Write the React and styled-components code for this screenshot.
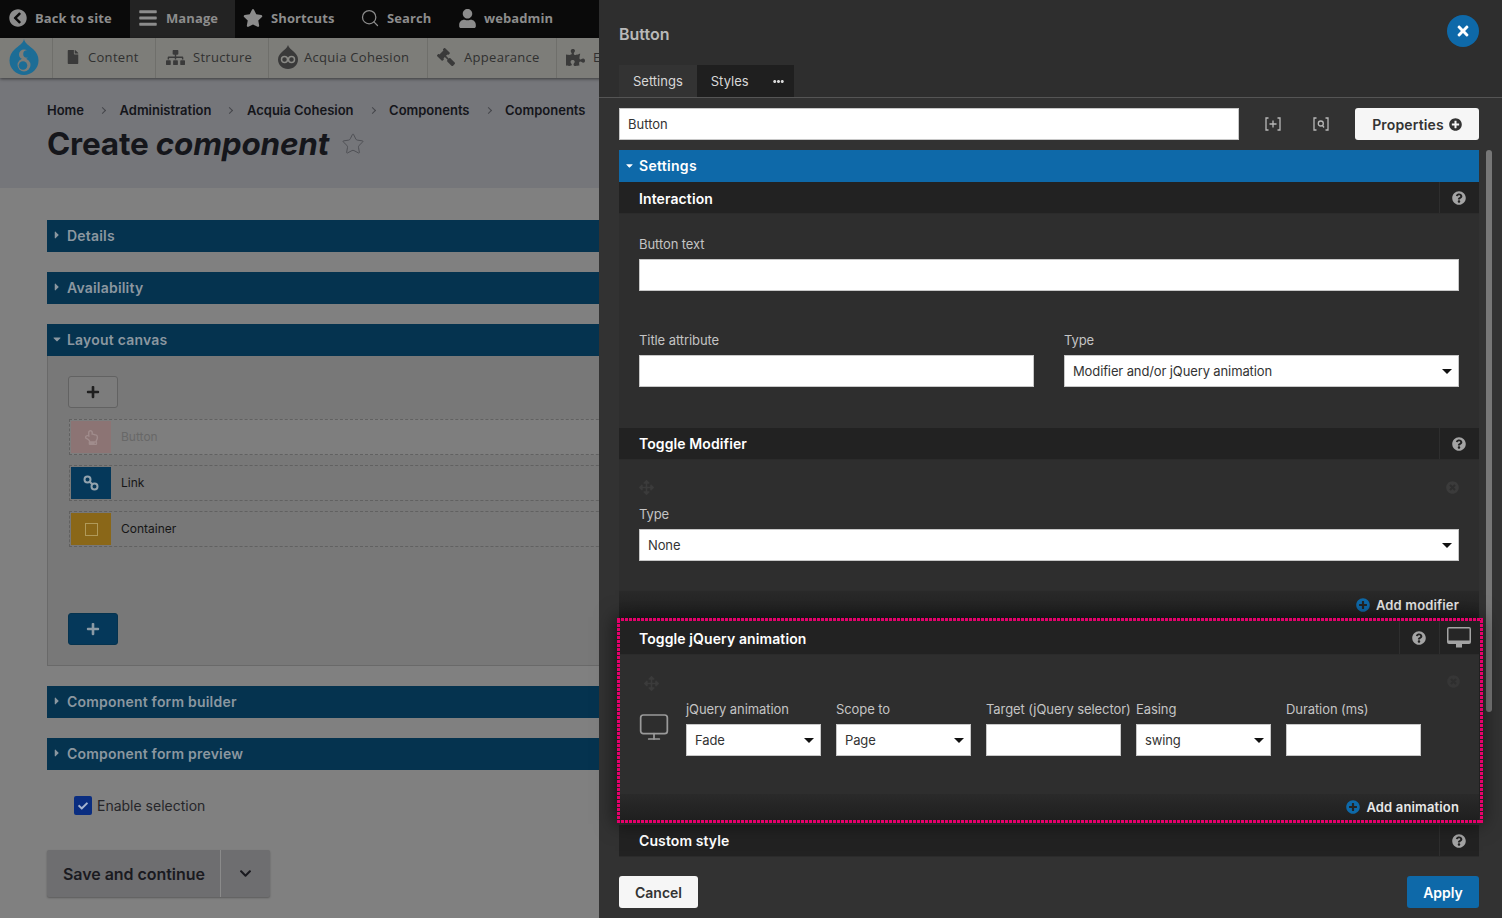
import React from "react";
import styled, { createGlobalStyle } from "styled-components";
import {
  FaChevronCircleLeft,
  FaBars,
  FaStar,
  FaUser,
  FaFile,
  FaSitemap,
  FaGavel,
  FaPuzzlePiece,
  FaPlus,
  FaCheck,
  FaTimes,
  FaPlusCircle,
  FaQuestionCircle,
  FaTimesCircle,
  FaArrowsAlt,
  FaEllipsisH,
  FaCaretDown,
  FaCaretRight,
  FaChevronDown,
  FaRegHandPointUp,
} from "react-icons/fa";
import { Search, Star, Monitor } from "lucide-react";

const GlobalStyle = createGlobalStyle`
  html, body {
    margin: 0;
    padding: 0;
    background: #323232;
  }
  * {
    box-sizing: border-box;
  }
`;

const Page = styled.div`
  display: flex;
  width: 1502px;
  height: 918px;
  overflow: hidden;
  font-family: Inter, "Liberation Sans", sans-serif;
`;

/* left, dimmed admin page */
const Admin = styled.div`
  width: 599px;
  flex: none;
  height: 918px;
  overflow: hidden;
  background: #808080;
`;

const Toolbar = styled.div`
  display: flex;
  height: 38px;
  background: #0a0a0a;
  font-family: "Open Sans", "Liberation Sans", sans-serif;
  font-weight: 700;
  font-size: 13px;
  color: #8c8c8c;
`;

const ToolbarItem = styled.div`
  display: flex;
  align-items: center;
  gap: ${(p) => p.$gap || 8}px;
  height: 38px;
  padding: 0 0 2px ${(p) => p.$left || 0}px;
  width: ${(p) => p.$width}px;
  background: ${(p) => (p.$active ? "#232323" : "transparent")};
  letter-spacing: 0.1px;
  svg {
    flex: none;
  }
`;

const Tray = styled.div`
  display: flex;
  width: 640px;
  height: 40px;
  background: #7d7d79;
  box-shadow: 0 1px 3px rgba(0, 0, 0, 0.5);
  position: relative;
  font-family: "Open Sans", "Liberation Sans", sans-serif;
  font-size: 13px;
  letter-spacing: 0.3px;
`;

const TrayItem = styled.div`
  display: flex;
  align-items: center;
  gap: ${(p) => p.$gap || 8}px;
  flex: none;
  width: ${(p) => p.$width}px;
  padding: 0 0 2px ${(p) => p.$left || 13}px;
  border-right: 1px solid #6f6f6b;
  color: #303030;
  svg {
    flex: none;
    color: #3a3a3a;
  }
`;

const FlippedIcon = styled.span`
  display: flex;
  transform: scaleX(-1);
`;

const PageHeader = styled.div`
  height: 110px;
  padding: 24px 0 0 47px;
  background: #75767a;
`;

const Breadcrumbs = styled.div`
  display: flex;
  align-items: center;
  font-size: 13px;
  font-weight: 600;
  line-height: 16px;
  color: #14151a;
  white-space: nowrap;
`;

const CrumbSep = styled.span`
  display: inline-block;
  width: 5px;
  height: 5px;
  margin: 0 14.5px 0 16px;
  border-top: 1px solid #45464a;
  border-right: 1px solid #45464a;
  transform: rotate(45deg);
`;

const TitleRow = styled.div`
  display: flex;
  align-items: center;
  gap: 12px;
  margin-top: 6px;
  color: #15161b;
  svg {
    color: #4f5055;
  }
`;

const Title = styled.h1`
  margin: 0;
  font-size: 31.5px;
  line-height: 40px;
  font-weight: 700;
  letter-spacing: -0.2px;
  em {
    font-style: italic;
  }
`;

const AdminBody = styled.div`
  padding: 32px 0 0 47px;
  width: 660px;
`;

const Bar = styled.div`
  display: flex;
  align-items: center;
  gap: 4px;
  height: 32px;
  padding: 0 0 2px 4px;
  margin-bottom: ${(p) => (p.$flush ? 0 : 20)}px;
  background: #05334f;
  color: #8b97a0;
  font-size: 14px;
  font-weight: 600;
  letter-spacing: 0.2px;
  svg {
    flex: none;
  }
`;

const Canvas = styled.div`
  height: 310px;
  margin-bottom: 20px;
  padding: 20px 0 0 20px;
  background: #787878;
  border: 1px solid #696969;
  border-top: none;
`;

const AddButton = styled.div`
  display: flex;
  align-items: center;
  justify-content: center;
  width: 50px;
  height: 32px;
  border-radius: 3px;
  border: 1px solid ${(p) => (p.$primary ? "#05334f" : "#626262")};
  background: ${(p) => (p.$primary ? "#05385a" : "#7c7c7c")};
  color: ${(p) => (p.$primary ? "#8b9aa5" : "#1f1f1f")};
`;

const CanvasList = styled.div`
  display: flex;
  flex-direction: column;
  gap: 10px;
  margin: 11px 0 66px 1px;
`;

const CanvasRow = styled.div`
  display: flex;
  align-items: center;
  gap: 10px;
  height: 36px;
  padding-left: 1px;
  border: 1px dashed #616161;
  font-size: 12px;
  color: ${(p) => (p.$muted ? "#686868" : "#161616")};
  background: ${(p) => (p.$muted ? "#7e7e7e" : "transparent")};
`;

const RowLabel = styled.span`
  margin-bottom: 2px;
`;

const Swatch = styled.div`
  display: flex;
  align-items: center;
  justify-content: center;
  width: 40px;
  height: 32px;
  background: ${(p) => p.$color};
  color: ${(p) => p.$ink};
`;

const EmptySquare = styled.div`
  width: 13px;
  height: 13px;
  border: 1px solid #b09a5a;
`;

const CheckRow = styled.div`
  display: flex;
  align-items: center;
  gap: 5px;
  margin: 26px 0 0 27px;
  font-size: 14px;
  color: #26262a;
`;

const CheckBox = styled.div`
  display: flex;
  align-items: center;
  justify-content: center;
  width: 18px;
  height: 19px;
  border-radius: 2px;
  background: #0a2d80;
  color: #a6b4cf;
`;

const SaveGroup = styled.div`
  display: flex;
  width: 223px;
  height: 47px;
  margin-top: 35px;
  border-radius: 2px;
  background: #6e6e70;
  box-shadow: 0 1px 2px rgba(0, 0, 0, 0.3);
  color: #1a1a1f;
`;

const SaveLabel = styled.div`
  display: flex;
  align-items: center;
  width: 174px;
  padding-left: 16px;
  font-size: 16px;
  font-weight: 600;
  letter-spacing: -0.05px;
  border-right: 1px solid #8a8a8a;
`;

const SaveCaret = styled.div`
  display: flex;
  flex: 1;
  align-items: center;
  justify-content: center;
`;

/* right, cohesion modal */
const Panel = styled.div`
  position: relative;
  flex: 1;
  height: 918px;
  background: #323232;
  background-image: linear-gradient(#2e2e2e, #2e2e2e 97px, #323232 98px);
  font-size: 13px;
  color: #d0d0d0;
`;

const PanelHead = styled.div`
  display: flex;
  align-items: flex-start;
  justify-content: space-between;
  height: 65px;
  padding: 15px 23px 0 20px;
`;

const PanelTitle = styled.div`
  margin-top: 9px;
  font-size: 16px;
  font-weight: 600;
  line-height: 20px;
  color: #b9b9b9;
`;

const CloseButton = styled.div`
  display: flex;
  align-items: center;
  justify-content: center;
  width: 32px;
  height: 32px;
  border-radius: 50%;
  background: #0e69a9;
  color: #fff;
`;

const Tabs = styled.div`
  display: flex;
  height: 33px;
  padding-left: 20px;
  border-bottom: 1px solid #555;
`;

const Tab = styled.div`
  display: flex;
  align-items: center;
  gap: ${(p) => p.$gap || 0}px;
  height: 32px;
  padding: 0 ${(p) => p.$pad}px 0 14px;
  background: ${(p) => (p.$active ? "#333" : "#1f1f1f")};
  color: #d8d8d8;
`;

const TitleBar = styled.div`
  display: flex;
  align-items: center;
  height: 32px;
  margin: 10px 23px 10px 20px;
`;

const TextBox = styled.input`
  display: block;
  width: ${(p) => (p.$width ? p.$width + "px" : "100%")};
  height: 32px;
  padding: 0 8px;
  border: 1px solid #c8c8c8;
  border-radius: 0;
  background: #fff;
  outline: none;
  font: 400 13px Inter, "Liberation Sans", sans-serif;
  color: #333;
`;

const ShortcutIcons = styled.div`
  display: flex;
  gap: 32px;
  margin-left: 26px;
  color: #b8b8b8;
`;

const PropertiesButton = styled.div`
  display: flex;
  align-items: center;
  justify-content: center;
  gap: 5px;
  width: 124px;
  height: 32px;
  margin-left: auto;
  border-radius: 3px;
  background: #f6f6f6;
  font-size: 14px;
  font-weight: 600;
  letter-spacing: 0.15px;
  color: #333;
`;

const Scroller = styled.div`
  height: 712px;
  margin: 0 23px 0 20px;
  position: relative;
`;

const ScrollThumb = styled.div`
  position: absolute;
  top: 150px;
  right: 10px;
  width: 6px;
  height: 562px;
  border-radius: 3px;
  background: #777;
`;

const BlueBar = styled.div`
  display: flex;
  align-items: center;
  gap: 4px;
  height: 32px;
  padding: 0 0 2px 5px;
  background: #0e69a9;
  color: #fff;
  font-size: 14px;
  font-weight: 600;
  letter-spacing: 0.3px;
`;

const SectionHead = styled.div`
  display: flex;
  align-items: stretch;
  height: ${(p) => p.$height || 32}px;
  margin-top: ${(p) => p.$gapTop || 0}px;
  background: #222;
  border-bottom: 1px solid #2b2b2b;
  color: #fff;
  font-size: 14px;
  font-weight: 600;
  letter-spacing: 0.1px;
`;

const SectionName = styled.div`
  display: flex;
  align-items: center;
  flex: 1;
  padding: ${(p) => (p.$nudge ? 2 : 0)}px 0 0 20px;
`;

const HeadIcon = styled.div`
  display: flex;
  align-items: center;
  justify-content: center;
  width: 40px;
  padding-right: 1px;
  border-left: 1px solid #2e2e2e;
  color: #a4a4a4;
`;

const SectionBody = styled.div`
  height: ${(p) => p.$height}px;
  padding: ${(p) => p.$top}px 20px 0;
  background: #2e2e2e;
`;

const FieldRow = styled.div`
  display: flex;
  gap: 30px;
  margin-top: ${(p) => p.$top || 0}px;
`;

const Field = styled.div`
  flex: ${(p) => (p.$width ? "none" : 1)};
  width: ${(p) => (p.$width ? p.$width + "px" : "auto")};
  margin-top: ${(p) => p.$top || 0}px;
`;

const Label = styled.div`
  height: 16px;
  margin-bottom: 7px;
  font-size: 13px;
  line-height: 16px;
  letter-spacing: -0.08px;
  color: #c4c4c4;
  white-space: nowrap;
`;

const SelectBox = styled.div`
  display: flex;
  align-items: center;
  justify-content: space-between;
  height: 32px;
  padding: 0 6px 0 8px;
  border: 1px solid #c8c8c8;
  background: #fff;
  letter-spacing: -0.12px;
  color: #333;
`;

const SelectCaret = styled.span`
  width: 0;
  height: 0;
  border-left: 5px solid transparent;
  border-right: 5px solid transparent;
  border-top: 5px solid #111;
`;

const DragRow = styled.div`
  display: flex;
  align-items: center;
  justify-content: space-between;
  height: 16px;
  color: #3b3b3b;
`;

const SectionFoot = styled.div`
  display: flex;
  align-items: center;
  justify-content: flex-end;
  gap: 6px;
  height: ${(p) => p.$height}px;
  padding-right: 20px;
  background: linear-gradient(#2a2a2a, #1f1f1f);
  color: #e8e8e8;
  font-size: 13px;
  font-weight: 600;
  letter-spacing: 0.15px;
  svg {
    color: #0e69a9;
  }
`;

const AnimationBox = styled.div`
  position: relative;
  margin-top: 2px;
  box-shadow: 0 0 18px 4px rgba(0, 0, 0, 0.55);
  z-index: 1;
  &::after {
    content: "";
    position: absolute;
    inset: -3px -4px -3px -2px;
    pointer-events: none;
    background:
      repeating-linear-gradient(90deg, #e6006b 0 3px, transparent 3px 4px) top / 100% 3px no-repeat,
      repeating-linear-gradient(90deg, #e6006b 0 3px, transparent 3px 4px) bottom / 100% 3px no-repeat,
      repeating-linear-gradient(0deg, #e6006b 0 3px, transparent 3px 4px) left / 3px 100% no-repeat,
      repeating-linear-gradient(0deg, #e6006b 0 3px, transparent 3px 4px) right / 3px 100% no-repeat;
  }
`;

const AnimationBody = styled.div`
  position: relative;
  height: 139px;
  padding: 46px 0 0 67px;
  background: #2e2e2e;
`;

const CornerDrag = styled.div`
  position: absolute;
  top: 21px;
  left: 25px;
  color: #3b3b3b;
`;

const CornerClose = styled.div`
  position: absolute;
  top: 20px;
  right: 19px;
  color: #363636;
`;

const AnimationFields = styled.div`
  display: flex;
  gap: 15px;
`;

const DeviceIcon = styled.div`
  position: absolute;
  top: 56px;
  left: 19px;
  color: #9a9a9a;
`;

const PanelFoot = styled.div`
  display: flex;
  align-items: flex-start;
  justify-content: space-between;
  height: 56px;
  padding: 14px 23px 0 20px;
`;

const FootButton = styled.div`
  display: flex;
  align-items: center;
  justify-content: center;
  width: ${(p) => p.$width}px;
  height: 32px;
  border-radius: 3px;
  background: ${(p) => (p.$primary ? "#0e69a9" : "#f6f6f6")};
  color: ${(p) => (p.$primary ? "#fff" : "#333")};
  font-size: 14px;
  font-weight: 600;
`;

const DrupalLogo = () => (
  <svg width="30" height="36" viewBox="0 0 30 36">
    <path
      d="M15 0c1 5 6 7 9 10 3.600 3.400 5.500 7 5.500 11.500C29.500 29.500 23 36 15 36S.5 29.500.5 21.500C.5 17 2.500 13.400 6 10c3-3 8-5 9-10z"
      fill="#1c6d96"
    />
    <circle cx="15" cy="15.500" r="5" fill="#7d7d79" />
    <circle cx="15" cy="26" r="6.500" fill="#7d7d79" />
    <circle cx="18" cy="15" r="3.800" fill="#1c6d96" />
    <circle cx="14" cy="26.500" r="4.300" fill="#1c6d96" />
  </svg>
);

const AcquiaIcon = () => (
  <svg width="20" height="24" viewBox="0 0 20 24">
    <path d="M10 0c1 3 3 4 5 6 3 2.500 5 5 5 8.500C20 20 15.500 24 10 24S0 20 0 14.500C0 11 2 8.500 5 6c2-2 4-3 5-6z" fill="#3a3a3a" />
    <circle cx="6.500" cy="14.500" r="3" fill="none" stroke="#8a8a86" strokeWidth="1.500" />
    <circle cx="13.500" cy="14.500" r="3" fill="none" stroke="#8a8a86" strokeWidth="1.500" />
  </svg>
);

const LinkIcon = () => (
  <svg width="16" height="16" viewBox="0 0 16 16" fill="none" stroke="#93a3ae" strokeWidth="2">
    <circle cx="4.500" cy="4.500" r="3" />
    <circle cx="11.500" cy="11.500" r="3" />
    <path d="M6.500 6.500l3 3" />
  </svg>
);

const ExpandIcon = () => (
  <svg width="16" height="14" viewBox="0 0 16 14" fill="none" stroke="currentColor" strokeWidth="1.300">
    <path d="M3.500 1H1v12h2.500M12.500 1H15v12h-2.500M8 3.500v7M4.500 7h7" />
  </svg>
);

const SearchBracketIcon = () => (
  <svg width="16" height="14" viewBox="0 0 16 14" fill="none" stroke="currentColor" strokeWidth="1.300">
    <path d="M3.500 1H1v12h2.500M12.500 1H15v12h-2.500" />
    <circle cx="7.800" cy="6.500" r="2.500" />
    <path d="M9.500 8.500l1.500 2" />
  </svg>
);

const DesktopFilledIcon = () => (
  <svg width="24" height="21" viewBox="0 0 24 21">
    <rect x="0" y="0" width="24" height="17" rx="2" fill="#a4a4a4" />
    <rect x="1.500" y="1.500" width="21" height="12" fill="#262626" />
    <rect x="9" y="17" width="6" height="3.500" fill="#a4a4a4" />
  </svg>
);

const Select = ({ value }) => (
  <SelectBox>
    {value}
    <SelectCaret />
  </SelectBox>
);

const Help = () => (
  <HeadIcon>
    <FaQuestionCircle size={14} />
  </HeadIcon>
);

const AdminPage = () => (
  <Admin>
    <Toolbar>
      <ToolbarItem $width={130} $left={9}>
        <FaChevronCircleLeft size={18} />
        Back to site
      </ToolbarItem>
      <ToolbarItem $width={105} $active $left={8}>
        <FaBars size={20} />
        Manage
      </ToolbarItem>
      <ToolbarItem $width={117} $left={8}>
        <FaStar size={20} />
        Shortcuts
      </ToolbarItem>
      <ToolbarItem $width={98} $left={8} $gap={7}>
        <Search size={20} strokeWidth={1.500} />
        Search
      </ToolbarItem>
      <ToolbarItem $left={8} $gap={7}>
        <FaUser size={19} />
        webadmin
      </ToolbarItem>
    </Toolbar>
    <Tray>
      <TrayItem $width={53} $left={9}>
        <DrupalLogo />
      </TrayItem>
      <TrayItem $width={103}>
        <FaFile size={14} />
        Content
      </TrayItem>
      <TrayItem $width={113} $left={10}>
        <FaSitemap size={19} />
        Structure
      </TrayItem>
      <TrayItem $width={159} $left={9} $gap={6}>
        <AcquiaIcon />
        Acquia Cohesion
      </TrayItem>
      <TrayItem $width={129} $left={9} $gap={9}>
        <FlippedIcon>
          <FaGavel size={18} />
        </FlippedIcon>
        Appearance
      </TrayItem>
      <TrayItem $width={100} $left={9}>
        <FaPuzzlePiece size={19} />
        Extend
      </TrayItem>
    </Tray>
    <PageHeader>
      <Breadcrumbs>
        Home
        <CrumbSep />
        Administration
        <CrumbSep />
        Acquia Cohesion
        <CrumbSep />
        Components
        <CrumbSep />
        Components
      </Breadcrumbs>
      <TitleRow>
        <Title>
          Create <em>component</em>
        </Title>
        <Star size={24} strokeWidth={1} />
      </TitleRow>
    </PageHeader>
    <AdminBody>
      <Bar>
        <FaCaretRight size={12} />
        Details
      </Bar>
      <Bar>
        <FaCaretRight size={12} />
        Availability
      </Bar>
      <Bar $flush>
        <FaCaretDown size={12} />
        Layout canvas
      </Bar>
      <Canvas>
        <AddButton>
          <FaPlus size={14} />
        </AddButton>
        <CanvasList>
          <CanvasRow $muted>
            <Swatch $color="#8c7474" $ink="#a08c8c">
              <FaRegHandPointUp size={15} />
            </Swatch>
            <RowLabel>Button</RowLabel>
          </CanvasRow>
          <CanvasRow>
            <Swatch $color="#05385a">
              <LinkIcon />
            </Swatch>
            <RowLabel>Link</RowLabel>
          </CanvasRow>
          <CanvasRow>
            <Swatch $color="#8a6718">
              <EmptySquare />
            </Swatch>
            <RowLabel>Container</RowLabel>
          </CanvasRow>
        </CanvasList>
        <AddButton $primary>
          <FaPlus size={14} />
        </AddButton>
      </Canvas>
      <Bar>
        <FaCaretRight size={12} />
        Component form builder
      </Bar>
      <Bar $flush>
        <FaCaretRight size={12} />
        Component form preview
      </Bar>
      <CheckRow>
        <CheckBox>
          <FaCheck size={10} />
        </CheckBox>
        Enable selection
      </CheckRow>
      <SaveGroup>
        <SaveLabel>Save and continue</SaveLabel>
        <SaveCaret>
          <FaChevronDown size={13} />
        </SaveCaret>
      </SaveGroup>
    </AdminBody>
  </Admin>
);

const ModalPanel = () => (
  <Panel>
    <PanelHead>
      <PanelTitle>Button</PanelTitle>
      <CloseButton>
        <FaTimes size={16} />
      </CloseButton>
    </PanelHead>
    <Tabs>
      <Tab $active $pad={14}>
        Settings
      </Tab>
      <Tab $pad={10} $gap={24}>
        Styles
        <FaEllipsisH size={11} />
      </Tab>
    </Tabs>
    <TitleBar>
      <TextBox $width={620} defaultValue="Button" />
      <ShortcutIcons>
        <ExpandIcon />
        <SearchBracketIcon />
      </ShortcutIcons>
      <PropertiesButton>
        Properties
        <FaPlusCircle size={13} />
      </PropertiesButton>
    </TitleBar>
    <Scroller>
      <BlueBar>
        <FaCaretDown size={11} />
        Settings
      </BlueBar>
      <SectionHead>
        <SectionName $nudge>Interaction</SectionName>
        <Help />
      </SectionHead>
      <SectionBody $height={214} $top={22}>
        <Label>Button text</Label>
        <TextBox />
        <FieldRow $top={41}>
          <Field>
            <Label>Title attribute</Label>
            <TextBox />
          </Field>
          <Field>
            <Label>Type</Label>
            <Select value="Modifier and/or jQuery animation" />
          </Field>
        </FieldRow>
      </SectionBody>
      <SectionHead>
        <SectionName>Toggle Modifier</SectionName>
        <Help />
      </SectionHead>
      <SectionBody $height={131} $top={19}>
        <DragRow>
          <FaArrowsAlt size={15} />
          <FaTimesCircle size={13} />
        </DragRow>
        <Field $top={11}>
          <Label>Type</Label>
          <Select value="None" />
        </Field>
      </SectionBody>
      <SectionFoot $height={28}>
        <FaPlusCircle size={14} />
        Add modifier
      </SectionFoot>
      <AnimationBox>
        <SectionHead $height={34}>
          <SectionName $nudge>Toggle jQuery animation</SectionName>
          <Help />
          <HeadIcon>
            <DesktopFilledIcon />
          </HeadIcon>
        </SectionHead>
        <AnimationBody>
          <CornerDrag>
            <FaArrowsAlt size={15} />
          </CornerDrag>
          <CornerClose>
            <FaTimesCircle size={13} />
          </CornerClose>
          <DeviceIcon>
            <Monitor size={32} strokeWidth={1.300} />
          </DeviceIcon>
          <AnimationFields>
            <Field $width={135}>
              <Label>jQuery animation</Label>
              <Select value="Fade" />
            </Field>
            <Field $width={135}>
              <Label>Scope to</Label>
              <Select value="Page" />
            </Field>
            <Field $width={135}>
              <Label>Target (jQuery selector)</Label>
              <TextBox />
            </Field>
            <Field $width={135}>
              <Label>Easing</Label>
              <Select value="swing" />
            </Field>
            <Field $width={135}>
              <Label>Duration (ms)</Label>
              <TextBox />
            </Field>
          </AnimationFields>
        </AnimationBody>
        <SectionFoot $height={26}>
          <FaPlusCircle size={14} />
          Add animation
        </SectionFoot>
      </AnimationBox>
      <SectionHead $gapTop={5}>
        <SectionName>Custom style</SectionName>
        <Help />
      </SectionHead>
    </Scroller>
    <ScrollThumb />
    <PanelFoot>
      <FootButton $width={79}>Cancel</FootButton>
      <FootButton $width={72} $primary>
        Apply
      </FootButton>
    </PanelFoot>
  </Panel>
);

const App = () => (
  <>
    <GlobalStyle />
    <Page>
      <AdminPage />
      <ModalPanel />
    </Page>
  </>
);

export default App;
